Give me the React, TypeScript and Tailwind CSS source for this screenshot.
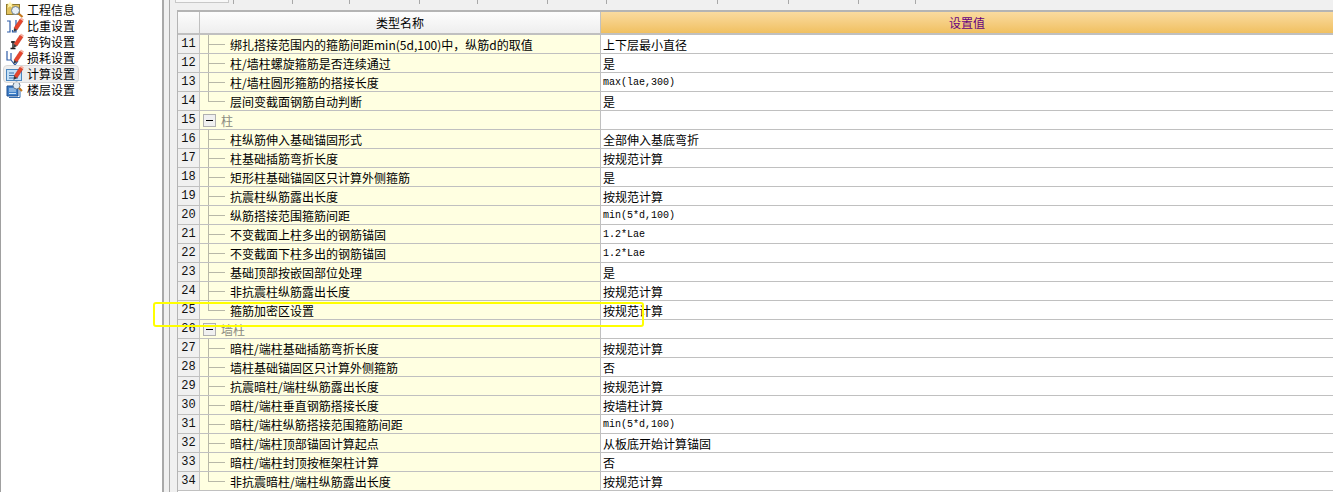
import React from "react";

const font = "font-['Noto_Sans_CJK_SC','Liberation_Sans',sans-serif]";

type Row = { no: number; name?: string; value?: string; group?: string; last?: boolean; mono?: boolean };

const rows: Row[] = [
  { no: 11, name: "绑扎搭接范围内的箍筋间距min(5d,100)中，纵筋d的取值", value: "上下层最小直径" },
  { no: 12, name: "柱/墙柱螺旋箍筋是否连续通过", value: "是" },
  { no: 13, name: "柱/墙柱圆形箍筋的搭接长度", value: "max(lae,300)", mono: true },
  { no: 14, name: "层间变截面钢筋自动判断", value: "是", last: true },
  { no: 15, group: "柱" },
  { no: 16, name: "柱纵筋伸入基础锚固形式", value: "全部伸入基底弯折" },
  { no: 17, name: "柱基础插筋弯折长度", value: "按规范计算" },
  { no: 18, name: "矩形柱基础锚固区只计算外侧箍筋", value: "是" },
  { no: 19, name: "抗震柱纵筋露出长度", value: "按规范计算" },
  { no: 20, name: "纵筋搭接范围箍筋间距", value: "min(5*d,100)", mono: true },
  { no: 21, name: "不变截面上柱多出的钢筋锚固", value: "1.2*Lae", mono: true },
  { no: 22, name: "不变截面下柱多出的钢筋锚固", value: "1.2*Lae", mono: true },
  { no: 23, name: "基础顶部按嵌固部位处理", value: "是" },
  { no: 24, name: "非抗震柱纵筋露出长度", value: "按规范计算" },
  { no: 25, name: "箍筋加密区设置", value: "按规范计算", last: true },
  { no: 26, group: "墙柱" },
  { no: 27, name: "暗柱/端柱基础插筋弯折长度", value: "按规范计算" },
  { no: 28, name: "墙柱基础锚固区只计算外侧箍筋", value: "否" },
  { no: 29, name: "抗震暗柱/端柱纵筋露出长度", value: "按规范计算" },
  { no: 30, name: "暗柱/端柱垂直钢筋搭接长度", value: "按墙柱计算" },
  { no: 31, name: "暗柱/端柱纵筋搭接范围箍筋间距", value: "min(5*d,100)", mono: true },
  { no: 32, name: "暗柱/端柱顶部锚固计算起点", value: "从板底开始计算锚固" },
  { no: 33, name: "暗柱/端柱封顶按框架柱计算", value: "否" },
  { no: 34, name: "非抗震暗柱/端柱纵筋露出长度", value: "按规范计算", last: true },
];

// red pencil leaning right, shared by most of the nav icons
const Pencil = () => (
  <>
    <path d="M8 11 L14 2 L17 4 L11 13 Z" fill="#e8452c" stroke="#b82a18" strokeWidth="0.5" />
    <path d="M14 2 L15 0.5 L18 2.5 L17 4 Z" fill="#f6b0a0" />
    <path d="M8 11 L7.5 15 L11 13 Z" fill="#3a3a3a" />
  </>
);

const icons: React.ReactNode[] = [
  <>
    <rect x="0.5" y="3.5" width="13" height="10" fill="#e2c25e" stroke="#8f7a30" />
    <path d="M4 0 L5 2.5 L7.5 2.5 L5.5 4 L6.5 7 L4 5.2 L1.5 7 L2.5 4 L0.5 2.5 L3 2.5 Z" fill="#fff6b0" />
    <circle cx="9.5" cy="9.5" r="4" fill="#e8f0f6" stroke="#6f7f8e" />
    <path d="M12.5 12.5 L16.5 16" stroke="#c4781c" strokeWidth="2.2" />
  </>,
  <>
    <path d="M1 4 H4 V15 H1 M10 3 V15 H6.5 V13" fill="none" stroke="#2f5da8" strokeWidth="1.2" />
    <Pencil />
  </>,
  <>
    <path d="M7 8 V15.5 M4.5 15.5 H9.5 M5 9 H9" fill="none" stroke="#1c1c1c" strokeWidth="1.4" />
    <Pencil />
  </>,
  <>
    <path d="M1 2 V11 H5 V4 M5 11 L9 16 L12 12" fill="none" stroke="#2f5da8" strokeWidth="1.2" />
    <Pencil />
  </>,
  <>
    <rect x="0.5" y="4.5" width="15" height="11" fill="#c4e0f6" stroke="#4a86c0" />
    <path d="M3 8 H8 M3 10.5 H12 M3 13 H12" stroke="#3a6ea8" />
    <Pencil />
  </>,
  <>
    <path d="M1 5 H12 V15 H1 Z" fill="#3f7fc8" stroke="#1f4f90" />
    <path d="M3 16.5 H14 V7" fill="none" stroke="#2f68ac" />
    <path d="M3 8 H10 M3 10 H10 M3 12.5 H10" stroke="#cfe4f6" />
    <circle cx="10.5" cy="4.5" r="3.5" fill="#dfeaf3" stroke="#66788a" />
    <path d="M13 7 L16 10" stroke="#c4781c" strokeWidth="2" />
  </>,
];

const navItems = ["工程信息", "比重设置", "弯钩设置", "损耗设置", "计算设置", "楼层设置"];

// widths between the tab separators along the top edge
const tabStops = [
  "w-[5px]", "w-[59px]", "w-[57px]", "w-[70px]", "w-[58px]", "w-[70px]",
  "w-[59px]", "w-[111px]", "w-[71px]", "w-[70px]", "w-[57px]",
];

function Sidebar() {
  return (
    <div className="w-[164px] h-full shrink-0 bg-white border-l border-l-[#a0a0a0] border-r-2 border-r-[#a9a9a9] pt-[2px]">
      {navItems.map((label, i) => (
        <div
          key={label}
          className={`flex items-center w-[74px] h-[16px] ml-[3px] pl-[2px] rounded-[3px] ${
            i === 4 ? "bg-[#eeeeee] outline outline-[#d8d8d8]" : ""
          }`}
        >
          <svg viewBox="0 0 18 18" className="w-[18px] h-[18px] shrink-0 -my-[1px]">
            {icons[i]}
          </svg>
          <span className="ml-[3px] h-[16px] leading-[16px] text-[12px] text-black whitespace-nowrap">
            {label}
          </span>
        </div>
      ))}
    </div>
  );
}

function Tree({ row }: { row: Row }) {
  return (
    <div className="relative w-[30px] h-full shrink-0">
      <div className={`absolute left-[8px] top-0 w-px bg-[#b8b8a8] ${row.last ? "h-[10px]" : "h-[19px]"}`} />
      <div className="absolute left-[8px] top-[9px] w-[17px] h-px bg-[#b8b8a8]" />
    </div>
  );
}

function TableRow({ row }: { row: Row }) {
  return (
    <div className="flex h-[19px] border-b border-[#c0c0c0]">
      <div className="w-[22px] shrink-0 bg-[#f0f0f0] border-r border-[#c4c4c4] text-center text-[12px] leading-[19px] font-['Liberation_Mono',monospace] text-[#111111]">
        {row.no}
      </div>
      <div className="w-[401px] shrink-0 bg-[#ffffe1] border-r border-[#c0c0c0] flex items-start overflow-hidden">
        {row.group ? (
          <>
            <div className="ml-[3px] mt-[3px] w-[13px] h-[13px] border border-[#b0b0b0] bg-[#f0f0f0] flex items-center justify-center">
              <div className="w-[7px] h-px bg-black" />
            </div>
            <span className="ml-[5px] text-[12px] leading-[20px] text-[#8a8a80]">{row.group}</span>
          </>
        ) : (
          <>
            <Tree row={row} />
            <span className="text-[12px] leading-[20px] text-black whitespace-nowrap">{row.name}</span>
          </>
        )}
      </div>
      <div
        className={`flex-1 bg-white pl-[2px] text-black whitespace-nowrap ${
          row.mono ? "text-[10px] leading-[19px] font-['Liberation_Mono',monospace]" : "text-[12px] leading-[20px]"
        }`}
      >
        {row.value}
      </div>
    </div>
  );
}

export default function App() {
  return (
    <div className={`relative flex w-[1333px] h-[492px] overflow-hidden bg-[#f0f0f0] ${font}`}>
      <Sidebar />
      <div className="flex-1 min-w-0 pl-[5px]">
        <div className="h-full border-l border-[#a9a9a9] pl-[7px] flex flex-col">
          <div className="h-[10px] shrink-0 flex items-start">
            <div className="w-[54px] -ml-[2px] h-[3px] bg-[#f8f8f8] border border-t-0 border-[#c8c8c8] shrink-0" />
            {tabStops.map((w, i) => (
              <div key={i} className={`${w} h-[4px] shrink-0 border-r border-[#a8a8a8]`} />
            ))}
          </div>
          <div className="flex-1 min-h-0 border-t-2 border-l border-[#b4b4b4] overflow-hidden bg-white">
            <div className="flex h-[23px] border-b-2 border-[#c0c0c0]">
              <div className="w-[22px] shrink-0 bg-gradient-to-b from-[#fcfcfc] to-[#eeeeee] border-r border-[#c0c0c0]" />
              <div className="w-[401px] shrink-0 bg-gradient-to-b from-[#fdfdfd] to-[#eeeeee] border-r border-[#c0c0c0] text-center text-[12px] leading-[22px] text-black">
                类型名称
              </div>
              <div className="flex-1 bg-gradient-to-b from-[#fadb9f] to-[#f0c060] text-center text-[12px] leading-[22px] text-[#660080]">
                设置值
              </div>
            </div>
            {rows.map((row) => (
              <TableRow key={row.no} row={row} />
            ))}
          </div>
        </div>
      </div>
      {/* hand drawn yellow marker from the screenshot */}
      <div className="absolute left-[153px] top-[302px] w-[491px] h-[25px] border-2 border-[#ffff00] rounded-[3px] pointer-events-none" />
    </div>
  );
}
